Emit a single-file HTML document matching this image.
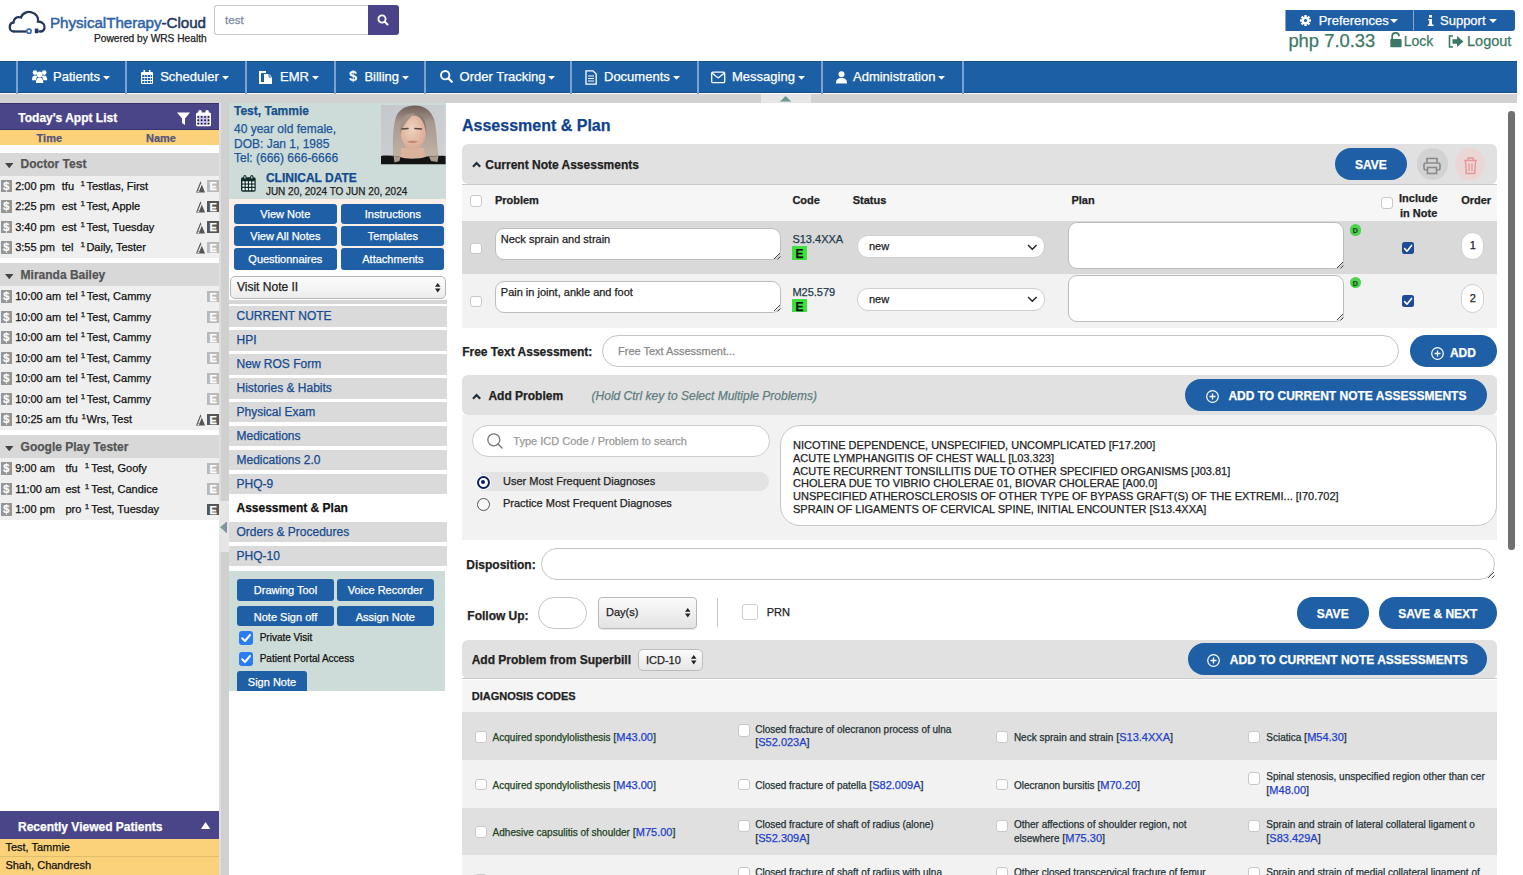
<!DOCTYPE html>
<html><head><meta charset="utf-8">
<style>
*{box-sizing:border-box;margin:0;padding:0}
html,body{width:1523px;height:875px;overflow:hidden;background:#fff;font-family:"Liberation Sans",sans-serif;color:#222}
.a{position:absolute}
.t{position:absolute;white-space:nowrap;line-height:1}
body{-webkit-text-stroke:0.25px currentColor}
.b{font-weight:bold}
svg{position:absolute;overflow:visible}
</style></head><body>
<!-- HEADER -->
<svg style="left:0;top:0" width="60" height="45">
 <path d="M13.5 31.5 C8.5 31.5 8.5 23 13.5 22.5 C13.5 18.5 17 16 21 17.5 C22.5 12.5 28 11 32 12.5 C36.5 14 38.5 17.5 38 21.5 C43 21.5 45 25 44.5 28 C44 30.5 42.5 31.5 40.5 31.5" fill="none" stroke="#24385e" stroke-width="2.3" stroke-linecap="round"/>
 <path d="M13.5 31.5 L26.5 31.5" stroke="#24385e" stroke-width="2.3" fill="none"/>
 <circle cx="29" cy="31.2" r="2.1" fill="none" stroke="#2f67b0" stroke-width="1.6"/>
 <rect x="34.8" y="28.6" width="3.6" height="4.6" fill="#24385e"/>
 <path d="M38.4 31.4 L40.5 31.4" stroke="#24385e" stroke-width="2"/>
</svg>
<div class="t" style="left:50px;top:14.6px;font-size:15.2px;color:#2f63a6;letter-spacing:-0.05px;-webkit-text-stroke:0.5px currentColor">PhysicalTherapy<span style="color:#24385e">-Cloud</span></div>
<div class="t" style="left:94px;top:33.6px;font-size:10.2px;color:#222">Powered by WRS Health</div>
<div class="a" style="left:214px;top:5px;width:155px;height:29.5px;border:1px solid #c9c9c9;border-right:none;border-radius:3px 0 0 3px;background:#fff"></div>
<div class="t" style="left:225px;top:14px;font-size:11.6px;color:#7c87a0">test</div>
<div class="a" style="left:367.5px;top:5px;width:31.5px;height:29.5px;background:#4a4389;border-radius:0 3px 3px 0"></div>
<svg style="left:377px;top:14px" width="12" height="12"><circle cx="5" cy="5" r="3.6" fill="none" stroke="#fff" stroke-width="1.8"/><path d="M7.6 7.6 L10.5 10.5" stroke="#fff" stroke-width="2" stroke-linecap="round"/></svg>

<div class="a" style="left:1284.6px;top:10px;width:230.4px;height:20.7px;background:#1e5ea5;border-radius:1px 3px 3px 1px;border-left:1px solid #8aa6c8"></div>
<div class="a" style="left:1413px;top:10px;width:1px;height:20.7px;background:#8aa6c8"></div>
<svg style="left:1300px;top:15px" width="12" height="12"><g fill="#fff"><circle cx="5.5" cy="5.5" r="3.8"/><rect x="4.3" y="0" width="2.4" height="11"/><rect x="0" y="4.3" width="11" height="2.4"/><rect x="4.3" y="0" width="2.4" height="11" transform="rotate(45 5.5 5.5)"/><rect x="4.3" y="0" width="2.4" height="11" transform="rotate(-45 5.5 5.5)"/></g><circle cx="5.5" cy="5.5" r="1.6" fill="#1e5ea5"/></svg>
<div class="t" style="left:1318.7px;top:13.8px;font-size:13px;color:#fff">Preferences</div>
<svg style="left:1390px;top:19px" width="9" height="5"><path d="M0 0 L8 0 L4 4Z" fill="#fff"/></svg>
<svg style="left:1427px;top:15px" width="8" height="12"><g fill="#fff"><rect x="2" y="0" width="3" height="2.6"/><path d="M1 4 L5 4 L5 9.5 L6.5 9.5 L6.5 11 L0.8 11 L0.8 9.5 L2.2 9.5 L2.2 5.3 L1 5.3Z"/></g></svg>
<div class="t" style="left:1440px;top:13.8px;font-size:13px;color:#fff">Support</div>
<svg style="left:1489px;top:19px" width="9" height="5"><path d="M0 0 L8 0 L4 4Z" fill="#fff"/></svg>

<div class="t" style="left:1288.4px;top:32.3px;font-size:18.4px;color:#3b7866">php 7.0.33</div>
<svg style="left:1389.5px;top:32px" width="13" height="16"><path d="M2.2 7 L2.2 4.2 C2.2 1.6 3.8 0.8 5.6 0.8 C7.4 0.8 9 1.6 9 4.2" fill="none" stroke="#3b7866" stroke-width="1.8"/><rect x="0.3" y="7" width="11.3" height="8.2" rx="1" fill="#3b7866"/></svg>
<div class="t" style="left:1403.7px;top:34.2px;font-size:14px;color:#3b7866">Lock</div>
<svg style="left:1447.5px;top:35px" width="17" height="13"><path d="M5 1 L1.5 1 L1.5 12 L5 12" fill="none" stroke="#3b7866" stroke-width="1.6"/><path d="M4.5 4.2 L9 4.2 L9 1 L15.5 6.5 L9 12 L9 8.8 L4.5 8.8Z" fill="#3b7866"/></svg>
<div class="t" style="left:1467px;top:34.2px;font-size:14.5px;color:#3b7866">Logout</div>

<!-- NAV -->
<div class="a" style="left:0;top:61.4px;width:1517px;height:31.9px;background:#1d5fa4;border-top:1px solid #184d88;border-bottom:1px solid #184d88"></div>
<div class="a" style="left:0;top:94.1px;width:1517px;height:9.2px;background:#d1d1d1"></div>
<div class="a" style="left:760.5px;top:94.1px;width:50.5px;height:9.2px;background:#e6e6e6"></div>
<svg style="left:780px;top:95.5px" width="12" height="6"><path d="M0 5.5 L5.6 0 L11.2 5.5Z" fill="#6a9a90"/></svg>
<div class="a" style="left:16px;top:61.4px;width:1.6px;height:32.3px;background:#7aa2cf"></div>
<div class="a" style="left:125px;top:61.4px;width:1.6px;height:32.3px;background:#7aa2cf"></div>
<div class="a" style="left:245px;top:61.4px;width:1.6px;height:32.3px;background:#7aa2cf"></div>
<div class="a" style="left:334px;top:61.4px;width:1.6px;height:32.3px;background:#7aa2cf"></div>
<div class="a" style="left:424px;top:61.4px;width:1.6px;height:32.3px;background:#7aa2cf"></div>
<div class="a" style="left:570px;top:61.4px;width:1.6px;height:32.3px;background:#7aa2cf"></div>
<div class="a" style="left:697px;top:61.4px;width:1.6px;height:32.3px;background:#7aa2cf"></div>
<div class="a" style="left:821px;top:61.4px;width:1.6px;height:32.3px;background:#7aa2cf"></div>
<div class="a" style="left:962px;top:61.4px;width:1.6px;height:32.3px;background:#7aa2cf"></div>
<div class="t" style="left:53px;top:70.4px;font-size:13px;color:#fff">Patients</div>
<svg style="left:102.8px;top:76px" width="9" height="5"><path d="M0 0 L7 0 L3.5 3.8Z" fill="#fff"/></svg>
<svg style="left:31.5px;top:70.2px" width="16" height="16"><g fill="#fff"><circle cx="3" cy="2.6" r="2.3"/><circle cx="12.2" cy="2.6" r="2.3"/><circle cx="7.6" cy="4.4" r="2.8"/><path d="M0 10.2 C0 6.8 1.2 5.6 3 5.6 C4.2 5.6 5 6 5.5 6.6 C4.5 7.6 4 8.8 4 10.2Z"/><path d="M15.2 10.2 C15.2 6.8 14 5.6 12.2 5.6 C11 5.6 10.2 6 9.7 6.6 C10.7 7.6 11.2 8.8 11.2 10.2Z"/><path d="M3.9 13 C3.9 9.3 5.4 7.6 7.6 7.6 C9.8 7.6 11.3 9.3 11.3 13Z"/></g></svg>
<div class="t" style="left:160.2px;top:70.4px;font-size:13px;color:#fff">Scheduler</div>
<svg style="left:221.5px;top:76px" width="9" height="5"><path d="M0 0 L7 0 L3.5 3.8Z" fill="#fff"/></svg>
<svg style="left:141px;top:70px" width="16" height="16"><g fill="#fff"><rect x="0" y="2" width="12" height="12" rx="1"/><rect x="2.5" y="0" width="1.6" height="3"/><rect x="7.9" y="0" width="1.6" height="3"/></g><g fill="#1e5ea5"><rect x="1.2" y="5" width="2.2" height="2"/><rect x="4.1" y="5" width="2.2" height="2"/><rect x="7" y="5" width="2.2" height="2"/><rect x="1.2" y="8" width="2.2" height="2"/><rect x="4.1" y="8" width="2.2" height="2"/><rect x="7" y="8" width="2.2" height="2"/><rect x="1.2" y="11" width="2.2" height="2"/><rect x="4.1" y="11" width="2.2" height="2"/><rect x="7" y="11" width="2.2" height="2"/><rect x="9.8" y="5" width="1.2" height="2"/><rect x="9.8" y="8" width="1.2" height="2"/><rect x="9.8" y="11" width="1.2" height="2"/></g></svg>
<div class="t" style="left:280px;top:70.4px;font-size:13px;color:#fff">EMR</div>
<svg style="left:311.7px;top:76px" width="9" height="5"><path d="M0 0 L7 0 L3.5 3.8Z" fill="#fff"/></svg>
<svg style="left:259.4px;top:70px" width="16" height="16"><g fill="#fff"><path d="M0 1 L7 1 L7 3 L2 3 L2 12 L5 12 L5 14 L0 14Z"/><path d="M5 4 L10 4 L13 7 L13 14 L5 14Z"/></g><path d="M10 4 L10 7 L13 7" fill="none" stroke="#1e5ea5" stroke-width="0.9"/></svg>
<div class="t" style="left:364.4px;top:70.4px;font-size:13px;color:#fff">Billing</div>
<svg style="left:401.9px;top:76px" width="9" height="5"><path d="M0 0 L7 0 L3.5 3.8Z" fill="#fff"/></svg>
<svg style="left:348.7px;top:70px" width="16" height="16"><text x="0" y="11.4" font-family="Liberation Sans" font-weight="bold" font-size="14.5" fill="#fff" stroke="none">$</text></svg>
<div class="t" style="left:459.6px;top:70.4px;font-size:13px;color:#fff">Order Tracking</div>
<svg style="left:548.4px;top:76px" width="9" height="5"><path d="M0 0 L7 0 L3.5 3.8Z" fill="#fff"/></svg>
<svg style="left:440px;top:70px" width="16" height="16"><circle cx="5.2" cy="5.2" r="4.2" fill="none" stroke="#fff" stroke-width="1.9"/><path d="M8.3 8.3 L11.8 11.8" stroke="#fff" stroke-width="2.2" stroke-linecap="round"/></svg>
<div class="t" style="left:604px;top:70.4px;font-size:13px;color:#fff">Documents</div>
<svg style="left:672.6px;top:76px" width="9" height="5"><path d="M0 0 L7 0 L3.5 3.8Z" fill="#fff"/></svg>
<svg style="left:585px;top:70px" width="16" height="16"><path d="M1 0.8 L8 0.8 L11.2 4 L11.2 14.2 L1 14.2Z" fill="none" stroke="#fff" stroke-width="1.3"/><path d="M3 6 L9 6 M3 8.5 L9 8.5 M3 11 L9 11" stroke="#fff" stroke-width="1.1"/></svg>
<div class="t" style="left:732px;top:70.4px;font-size:13px;color:#fff">Messaging</div>
<svg style="left:797.7px;top:76px" width="9" height="5"><path d="M0 0 L7 0 L3.5 3.8Z" fill="#fff"/></svg>
<svg style="left:711px;top:71.2px" width="16" height="16"><rect x="0.7" y="1.2" width="13" height="10.5" rx="1.2" fill="none" stroke="#fff" stroke-width="1.3"/><path d="M1 2 L7.2 7 L13.4 2" fill="none" stroke="#fff" stroke-width="1.3"/></svg>
<div class="t" style="left:853px;top:70.4px;font-size:13px;color:#fff">Administration</div>
<svg style="left:938.2px;top:76px" width="9" height="5"><path d="M0 0 L7 0 L3.5 3.8Z" fill="#fff"/></svg>
<svg style="left:835.5px;top:71px" width="16" height="16"><g fill="#fff"><circle cx="5.5" cy="3.3" r="3"/><path d="M0 12.5 C0 8.3 2 7 5.5 7 C9 7 11 8.3 11 12.5Z"/></g></svg>
<!-- LEFT -->
<div class="a" style="left:0;top:103.4px;width:219px;height:26.6px;background:#4a4589;border-top:1px solid #36316f;border-bottom:1px solid #36316f"></div>
<div class="t b" style="left:18.3px;top:112.1px;font-size:12px;color:#fff">Today's Appt List</div>
<svg style="left:176.5px;top:111.5px" width="14" height="14"><path d="M0 0.5 L13 0.5 L8 6.5 L8 13 L5 11 L5 6.5Z" fill="#fff"/></svg>
<svg style="left:196px;top:109.6px" width="16" height="17"><rect x="0" y="2.4" width="15" height="13.9" rx="1.6" fill="#fff"/><rect x="2.3" y="0" width="3.4" height="4.6" rx="1.6" fill="#fff"/><rect x="9.4" y="0" width="3.4" height="4.6" rx="1.6" fill="#fff"/><rect x="1.4" y="5.6" width="12.2" height="9.4" fill="#c9c5ef"/><g fill="#150f33"><circle cx="2.20" cy="6.90" r="0.95"/><circle cx="5.65" cy="6.90" r="0.95"/><circle cx="9.10" cy="6.90" r="0.95"/><circle cx="12.55" cy="6.90" r="0.95"/><circle cx="2.20" cy="10.25" r="0.95"/><circle cx="5.65" cy="10.25" r="0.95"/><circle cx="9.10" cy="10.25" r="0.95"/><circle cx="12.55" cy="10.25" r="0.95"/><circle cx="2.20" cy="13.60" r="0.95"/><circle cx="5.65" cy="13.60" r="0.95"/><circle cx="9.10" cy="13.60" r="0.95"/><circle cx="12.55" cy="13.60" r="0.95"/></g></svg>
<div class="a" style="left:0;top:129.9px;width:219px;height:15.1px;background:#fbd179"></div>
<div class="t b" style="left:36.6px;top:133px;font-size:11px;color:#55557a">Time</div>
<div class="t b" style="left:146px;top:133px;font-size:11px;color:#55557a">Name</div>
<div class="a" style="left:0;top:152.8px;width:219px;height:22.9px;background:#d8d8d8"></div>
<svg style="left:4.6px;top:163.4px" width="9" height="6"><path d="M0 0 L8.5 0 L4.25 5.2Z" fill="#444"/></svg>
<div class="t b" style="left:20.6px;top:158.4px;font-size:12px;color:#555">Doctor Test</div>
<div class="a" style="left:0;top:175.7px;width:219px;height:82.0px;background:#efefef"></div>
<div class="a" style="left:1.3px;top:179.8px;width:10.5px;height:12.6px;background:#969696"></div><div class="t b" style="left:2.9px;top:180.8px;font-size:11.5px;color:#fff;transform:scaleX(0.85);transform-origin:left">S</div><div class="a" style="left:6.2px;top:180.5px;width:1px;height:11px;background:#fff;opacity:.7"></div>
<div class="t" style="left:15.2px;top:180.7px;font-size:11px;color:#111">2:00 pm</div>
<div class="t" style="left:61.8px;top:180.7px;font-size:11px;color:#111">tfu</div>
<div class="t" style="left:80.6px;top:179.5px;font-size:8px;color:#111">1</div>
<div class="t" style="left:86.4px;top:180.7px;font-size:11px;color:#111">Testlas, First</div>
<svg style="left:195.5px;top:180.5px" width="10" height="12"><path d="M4.5 0.3 L9 11.6 L0 11.6Z" fill="#555"/><path d="M5.6 2.5 L2.8 9.2" stroke="#f0f0f0" stroke-width="1.3"/><rect x="1.6" y="9.6" width="1.6" height="1.4" fill="#f0f0f0"/></svg>
<div class="a" style="left:207.2px;top:180.0px;width:11.6px;height:11.5px;background:#b9b9b9"></div><div class="t b" style="left:209.6px;top:181.3px;font-size:11px;color:#fff">E</div>
<div class="a" style="left:1.3px;top:200.3px;width:10.5px;height:12.6px;background:#969696"></div><div class="t b" style="left:2.9px;top:201.3px;font-size:11.5px;color:#fff;transform:scaleX(0.85);transform-origin:left">S</div><div class="a" style="left:6.2px;top:201.0px;width:1px;height:11px;background:#fff;opacity:.7"></div>
<div class="t" style="left:15.2px;top:201.2px;font-size:11px;color:#111">2:25 pm</div>
<div class="t" style="left:61.8px;top:201.2px;font-size:11px;color:#111">est</div>
<div class="t" style="left:80.6px;top:200.0px;font-size:8px;color:#111">1</div>
<div class="t" style="left:86.4px;top:201.2px;font-size:11px;color:#111">Test, Apple</div>
<svg style="left:195.5px;top:201.0px" width="10" height="12"><path d="M4.5 0.3 L9 11.6 L0 11.6Z" fill="#555"/><path d="M5.6 2.5 L2.8 9.2" stroke="#f0f0f0" stroke-width="1.3"/><rect x="1.6" y="9.6" width="1.6" height="1.4" fill="#f0f0f0"/></svg>
<div class="a" style="left:207.2px;top:200.5px;width:11.6px;height:11.5px;background:#555"></div><div class="t b" style="left:209.6px;top:201.8px;font-size:11px;color:#fff">E</div>
<div class="a" style="left:1.3px;top:220.8px;width:10.5px;height:12.6px;background:#969696"></div><div class="t b" style="left:2.9px;top:221.8px;font-size:11.5px;color:#fff;transform:scaleX(0.85);transform-origin:left">S</div><div class="a" style="left:6.2px;top:221.5px;width:1px;height:11px;background:#fff;opacity:.7"></div>
<div class="t" style="left:15.2px;top:221.7px;font-size:11px;color:#111">3:40 pm</div>
<div class="t" style="left:61.8px;top:221.7px;font-size:11px;color:#111">est</div>
<div class="t" style="left:80.6px;top:220.5px;font-size:8px;color:#111">1</div>
<div class="t" style="left:86.4px;top:221.7px;font-size:11px;color:#111">Test, Tuesday</div>
<svg style="left:195.5px;top:221.5px" width="10" height="12"><path d="M4.5 0.3 L9 11.6 L0 11.6Z" fill="#555"/><path d="M5.6 2.5 L2.8 9.2" stroke="#f0f0f0" stroke-width="1.3"/><rect x="1.6" y="9.6" width="1.6" height="1.4" fill="#f0f0f0"/></svg>
<div class="a" style="left:207.2px;top:221.0px;width:11.6px;height:11.5px;background:#555"></div><div class="t b" style="left:209.6px;top:222.3px;font-size:11px;color:#fff">E</div>
<div class="a" style="left:1.3px;top:241.3px;width:10.5px;height:12.6px;background:#969696"></div><div class="t b" style="left:2.9px;top:242.3px;font-size:11.5px;color:#fff;transform:scaleX(0.85);transform-origin:left">S</div><div class="a" style="left:6.2px;top:242.0px;width:1px;height:11px;background:#fff;opacity:.7"></div>
<div class="t" style="left:15.2px;top:242.2px;font-size:11px;color:#111">3:55 pm</div>
<div class="t" style="left:61.8px;top:242.2px;font-size:11px;color:#111">tel</div>
<div class="t" style="left:80.6px;top:241.0px;font-size:8px;color:#111">1</div>
<div class="t" style="left:86.4px;top:242.2px;font-size:11px;color:#111">Daily, Tester</div>
<svg style="left:195.5px;top:242.0px" width="10" height="12"><path d="M4.5 0.3 L9 11.6 L0 11.6Z" fill="#555"/><path d="M5.6 2.5 L2.8 9.2" stroke="#f0f0f0" stroke-width="1.3"/><rect x="1.6" y="9.6" width="1.6" height="1.4" fill="#f0f0f0"/></svg>
<div class="a" style="left:207.2px;top:241.5px;width:11.6px;height:11.5px;background:#b9b9b9"></div><div class="t b" style="left:209.6px;top:242.8px;font-size:11px;color:#fff">E</div>
<div class="a" style="left:0;top:263.3px;width:219px;height:22.9px;background:#d8d8d8"></div>
<svg style="left:4.6px;top:273.9px" width="9" height="6"><path d="M0 0 L8.5 0 L4.25 5.2Z" fill="#444"/></svg>
<div class="t b" style="left:20.6px;top:268.9px;font-size:12px;color:#555">Miranda Bailey</div>
<div class="a" style="left:0;top:286.2px;width:219px;height:143.5px;background:#efefef"></div>
<div class="a" style="left:1.3px;top:290.3px;width:10.5px;height:12.6px;background:#969696"></div><div class="t b" style="left:2.9px;top:291.3px;font-size:11.5px;color:#fff;transform:scaleX(0.85);transform-origin:left">S</div><div class="a" style="left:6.2px;top:291.0px;width:1px;height:11px;background:#fff;opacity:.7"></div>
<div class="t" style="left:15.2px;top:291.2px;font-size:11px;color:#111">10:00 am</div>
<div class="t" style="left:66px;top:291.2px;font-size:11px;color:#111">tel</div>
<div class="t" style="left:80.8px;top:290.0px;font-size:8px;color:#111">1</div>
<div class="t" style="left:86.8px;top:291.2px;font-size:11px;color:#111">Test, Cammy</div>
<div class="a" style="left:207.2px;top:290.5px;width:11.6px;height:11.5px;background:#b9b9b9"></div><div class="t b" style="left:209.6px;top:291.8px;font-size:11px;color:#fff">E</div>
<div class="a" style="left:1.3px;top:310.8px;width:10.5px;height:12.6px;background:#969696"></div><div class="t b" style="left:2.9px;top:311.8px;font-size:11.5px;color:#fff;transform:scaleX(0.85);transform-origin:left">S</div><div class="a" style="left:6.2px;top:311.5px;width:1px;height:11px;background:#fff;opacity:.7"></div>
<div class="t" style="left:15.2px;top:311.7px;font-size:11px;color:#111">10:00 am</div>
<div class="t" style="left:66px;top:311.7px;font-size:11px;color:#111">tel</div>
<div class="t" style="left:80.8px;top:310.5px;font-size:8px;color:#111">1</div>
<div class="t" style="left:86.8px;top:311.7px;font-size:11px;color:#111">Test, Cammy</div>
<div class="a" style="left:207.2px;top:311.0px;width:11.6px;height:11.5px;background:#b9b9b9"></div><div class="t b" style="left:209.6px;top:312.3px;font-size:11px;color:#fff">E</div>
<div class="a" style="left:1.3px;top:331.3px;width:10.5px;height:12.6px;background:#969696"></div><div class="t b" style="left:2.9px;top:332.3px;font-size:11.5px;color:#fff;transform:scaleX(0.85);transform-origin:left">S</div><div class="a" style="left:6.2px;top:332.0px;width:1px;height:11px;background:#fff;opacity:.7"></div>
<div class="t" style="left:15.2px;top:332.2px;font-size:11px;color:#111">10:00 am</div>
<div class="t" style="left:66px;top:332.2px;font-size:11px;color:#111">tel</div>
<div class="t" style="left:80.8px;top:331.0px;font-size:8px;color:#111">1</div>
<div class="t" style="left:86.8px;top:332.2px;font-size:11px;color:#111">Test, Cammy</div>
<div class="a" style="left:207.2px;top:331.5px;width:11.6px;height:11.5px;background:#b9b9b9"></div><div class="t b" style="left:209.6px;top:332.8px;font-size:11px;color:#fff">E</div>
<div class="a" style="left:1.3px;top:351.8px;width:10.5px;height:12.6px;background:#969696"></div><div class="t b" style="left:2.9px;top:352.8px;font-size:11.5px;color:#fff;transform:scaleX(0.85);transform-origin:left">S</div><div class="a" style="left:6.2px;top:352.5px;width:1px;height:11px;background:#fff;opacity:.7"></div>
<div class="t" style="left:15.2px;top:352.7px;font-size:11px;color:#111">10:00 am</div>
<div class="t" style="left:66px;top:352.7px;font-size:11px;color:#111">tel</div>
<div class="t" style="left:80.8px;top:351.5px;font-size:8px;color:#111">1</div>
<div class="t" style="left:86.8px;top:352.7px;font-size:11px;color:#111">Test, Cammy</div>
<div class="a" style="left:207.2px;top:352.0px;width:11.6px;height:11.5px;background:#b9b9b9"></div><div class="t b" style="left:209.6px;top:353.3px;font-size:11px;color:#fff">E</div>
<div class="a" style="left:1.3px;top:372.3px;width:10.5px;height:12.6px;background:#969696"></div><div class="t b" style="left:2.9px;top:373.3px;font-size:11.5px;color:#fff;transform:scaleX(0.85);transform-origin:left">S</div><div class="a" style="left:6.2px;top:373.0px;width:1px;height:11px;background:#fff;opacity:.7"></div>
<div class="t" style="left:15.2px;top:373.2px;font-size:11px;color:#111">10:00 am</div>
<div class="t" style="left:66px;top:373.2px;font-size:11px;color:#111">tel</div>
<div class="t" style="left:80.8px;top:372.0px;font-size:8px;color:#111">1</div>
<div class="t" style="left:86.8px;top:373.2px;font-size:11px;color:#111">Test, Cammy</div>
<div class="a" style="left:207.2px;top:372.5px;width:11.6px;height:11.5px;background:#b9b9b9"></div><div class="t b" style="left:209.6px;top:373.8px;font-size:11px;color:#fff">E</div>
<div class="a" style="left:1.3px;top:392.8px;width:10.5px;height:12.6px;background:#969696"></div><div class="t b" style="left:2.9px;top:393.8px;font-size:11.5px;color:#fff;transform:scaleX(0.85);transform-origin:left">S</div><div class="a" style="left:6.2px;top:393.5px;width:1px;height:11px;background:#fff;opacity:.7"></div>
<div class="t" style="left:15.2px;top:393.7px;font-size:11px;color:#111">10:00 am</div>
<div class="t" style="left:66px;top:393.7px;font-size:11px;color:#111">tel</div>
<div class="t" style="left:80.8px;top:392.5px;font-size:8px;color:#111">1</div>
<div class="t" style="left:86.8px;top:393.7px;font-size:11px;color:#111">Test, Cammy</div>
<div class="a" style="left:207.2px;top:393.0px;width:11.6px;height:11.5px;background:#b9b9b9"></div><div class="t b" style="left:209.6px;top:394.3px;font-size:11px;color:#fff">E</div>
<div class="a" style="left:1.3px;top:413.3px;width:10.5px;height:12.6px;background:#969696"></div><div class="t b" style="left:2.9px;top:414.3px;font-size:11.5px;color:#fff;transform:scaleX(0.85);transform-origin:left">S</div><div class="a" style="left:6.2px;top:414.0px;width:1px;height:11px;background:#fff;opacity:.7"></div>
<div class="t" style="left:15.2px;top:414.2px;font-size:11px;color:#111">10:25 am</div>
<div class="t" style="left:65.6px;top:414.2px;font-size:11px;color:#111">tfu</div>
<div class="t" style="left:81.4px;top:413.0px;font-size:8px;color:#111">1</div>
<div class="t" style="left:86.6px;top:414.2px;font-size:11px;color:#111">Wrs, Test</div>
<svg style="left:195.5px;top:414.0px" width="10" height="12"><path d="M4.5 0.3 L9 11.6 L0 11.6Z" fill="#555"/><path d="M5.6 2.5 L2.8 9.2" stroke="#f0f0f0" stroke-width="1.3"/><rect x="1.6" y="9.6" width="1.6" height="1.4" fill="#f0f0f0"/></svg>
<div class="a" style="left:207.2px;top:413.5px;width:11.6px;height:11.5px;background:#555"></div><div class="t b" style="left:209.6px;top:414.8px;font-size:11px;color:#fff">E</div>
<div class="a" style="left:0;top:435.3px;width:219px;height:22.9px;background:#d8d8d8"></div>
<svg style="left:4.6px;top:445.9px" width="9" height="6"><path d="M0 0 L8.5 0 L4.25 5.2Z" fill="#444"/></svg>
<div class="t b" style="left:20.6px;top:440.9px;font-size:12px;color:#555">Google Play Tester</div>
<div class="a" style="left:0;top:458.2px;width:219px;height:61.5px;background:#efefef"></div>
<div class="a" style="left:1.3px;top:462.3px;width:10.5px;height:12.6px;background:#969696"></div><div class="t b" style="left:2.9px;top:463.3px;font-size:11.5px;color:#fff;transform:scaleX(0.85);transform-origin:left">S</div><div class="a" style="left:6.2px;top:463.0px;width:1px;height:11px;background:#fff;opacity:.7"></div>
<div class="t" style="left:15.2px;top:463.2px;font-size:11px;color:#111">9:00 am</div>
<div class="t" style="left:65.5px;top:463.2px;font-size:11px;color:#111">tfu</div>
<div class="t" style="left:84.7px;top:462.0px;font-size:8px;color:#111">1</div>
<div class="t" style="left:91.2px;top:463.2px;font-size:11px;color:#111">Test, Goofy</div>
<div class="a" style="left:207.2px;top:462.5px;width:11.6px;height:11.5px;background:#b9b9b9"></div><div class="t b" style="left:209.6px;top:463.8px;font-size:11px;color:#fff">E</div>
<div class="a" style="left:1.3px;top:482.8px;width:10.5px;height:12.6px;background:#969696"></div><div class="t b" style="left:2.9px;top:483.8px;font-size:11.5px;color:#fff;transform:scaleX(0.85);transform-origin:left">S</div><div class="a" style="left:6.2px;top:483.5px;width:1px;height:11px;background:#fff;opacity:.7"></div>
<div class="t" style="left:15.2px;top:483.7px;font-size:11px;color:#111">11:00 am</div>
<div class="t" style="left:65.5px;top:483.7px;font-size:11px;color:#111">est</div>
<div class="t" style="left:84.7px;top:482.5px;font-size:8px;color:#111">1</div>
<div class="t" style="left:91.2px;top:483.7px;font-size:11px;color:#111">Test, Candice</div>
<div class="a" style="left:207.2px;top:483.0px;width:11.6px;height:11.5px;background:#b9b9b9"></div><div class="t b" style="left:209.6px;top:484.3px;font-size:11px;color:#fff">E</div>
<div class="a" style="left:1.3px;top:503.3px;width:10.5px;height:12.6px;background:#969696"></div><div class="t b" style="left:2.9px;top:504.3px;font-size:11.5px;color:#fff;transform:scaleX(0.85);transform-origin:left">S</div><div class="a" style="left:6.2px;top:504.0px;width:1px;height:11px;background:#fff;opacity:.7"></div>
<div class="t" style="left:15.2px;top:504.2px;font-size:11px;color:#111">1:00 pm</div>
<div class="t" style="left:65.5px;top:504.2px;font-size:11px;color:#111">pro</div>
<div class="t" style="left:84.7px;top:503.0px;font-size:8px;color:#111">1</div>
<div class="t" style="left:91.2px;top:504.2px;font-size:11px;color:#111">Test, Tuesday</div>
<div class="a" style="left:207.2px;top:503.5px;width:11.6px;height:11.5px;background:#555"></div><div class="t b" style="left:209.6px;top:504.8px;font-size:11px;color:#fff">E</div>
<div class="a" style="left:219px;top:103.3px;width:10px;height:772px;background:#d0d0d0"></div>
<div class="a" style="left:219px;top:103.3px;width:2.4px;height:772px;background:#dedede"></div>
<div class="a" style="left:219px;top:501.4px;width:10px;height:50.4px;background:#e6e6e6"></div>
<svg style="left:219.5px;top:521.6px" width="7" height="11"><path d="M6.3 0 L6.3 10.7 L0 5.35Z" fill="#7d9c98"/><path d="M6.3 0 L6.3 10.7" stroke="#8a7fb0" stroke-width="1.2"/></svg>
<div class="a" style="left:0;top:811.1px;width:219px;height:27.8px;background:#4a4589"></div>
<div class="t b" style="left:18px;top:820.5px;font-size:12px;color:#fff">Recently Viewed Patients</div>
<svg style="left:200.8px;top:822.3px" width="10" height="8"><path d="M4.6 0 L9.2 6.9 L0 6.9Z" fill="#fff"/></svg>
<div class="a" style="left:0;top:838.9px;width:219px;height:36.1px;background:#fbd179"></div>
<div class="a" style="left:0;top:856.4px;width:219px;height:0.8px;background:#e2bd6c"></div>
<div class="t" style="left:5.4px;top:841.7px;font-size:11px;color:#111">Test, Tammie</div>
<div class="t" style="left:5.4px;top:860.2px;font-size:11px;color:#111">Shah, Chandresh</div>
<!-- /LEFT -->
<!-- MAIN -->
<div class="t b" style="left:462px;top:117.8px;font-size:16px;color:#0f428c;">Assessment &amp; Plan</div>
<div class="a" style="left:462px;top:144.4px;width:1034.5px;height:39.9px;background:#e1e1e1;border-radius:6px"></div>
<div class="a" style="left:462px;top:183.6px;width:1034.5px;height:1.2px;background:#c9c9c9;"></div>
<svg style="left:472px;top:161px" width="10" height="7"><path d="M1 5.8 L4.6 2 L8.2 5.8" fill="none" stroke="#1d2b36" stroke-width="2.1"/></svg>
<div class="t b" style="left:485.3px;top:158.8px;font-size:12px;color:#222;">Current Note Assessments</div>
<div class="a b" style="left:1334.8px;top:148px;width:72.1px;height:32.0px;background:#1f5fa6;border-radius:16.0px;color:#fff;font-size:12px;display:flex;align-items:center;justify-content:center;white-space:nowrap"><span style="display:flex;align-items:center;position:relative;top:1.2px">SAVE</span></div>
<div class="a" style="left:1416.5px;top:148.3px;width:31.6px;height:31.6px;background:#d2d2d2;border-radius:50%"></div>
<svg style="left:1422.5px;top:156.5px" width="19" height="18"><path d="M4 6 L4 1.5 L14 1.5 L14 6" fill="none" stroke="#8a8a8a" stroke-width="1.6"/><rect x="1" y="6" width="16" height="7" rx="2" fill="none" stroke="#8a8a8a" stroke-width="1.6"/><rect x="4.5" y="10.5" width="9" height="6" fill="#d2d2d2" stroke="#8a8a8a" stroke-width="1.6"/></svg>
<div class="a" style="left:1455px;top:148.3px;width:30.2px;height:31.6px;background:#ebd6d6;border-radius:50%"></div>
<svg style="left:1462.6px;top:156.5px" width="15" height="18"><path d="M1 3.5 L14 3.5 M5 3.5 L5 1 L10 1 L10 3.5" fill="none" stroke="#e59a9a" stroke-width="1.5"/><path d="M2.5 4 L3.3 16.5 L11.7 16.5 L12.5 4" fill="none" stroke="#e59a9a" stroke-width="1.5"/><path d="M6 6.5 L6 14 M9 6.5 L9 14" stroke="#e59a9a" stroke-width="1.4"/></svg>
<div class="a" style="left:462px;top:184.8px;width:1034.5px;height:36.3px;background:#f6f6f6;"></div>
<div class="a" style="left:469.8px;top:195.4px;width:11.8px;height:11.7px;background:#fff;border:1px solid #c8c8c8;border-radius:3px"></div>
<div class="t b" style="left:494.9px;top:195.4px;font-size:11px;color:#222;">Problem</div>
<div class="t b" style="left:792.4px;top:195.4px;font-size:11px;color:#222;">Code</div>
<div class="t b" style="left:852.7px;top:195.4px;font-size:11px;color:#222;">Status</div>
<div class="t b" style="left:1071.4px;top:195.4px;font-size:11px;color:#222;">Plan</div>
<div class="a" style="left:1381.2px;top:197.2px;width:12.2px;height:12.2px;background:#fff;border:1px solid #c8c8c8;border-radius:3px"></div>
<div class="t b" style="left:1399px;top:193.3px;font-size:11px;color:#222;">Include</div>
<div class="t b" style="left:1400px;top:207.5px;font-size:11px;color:#222;">in Note</div>
<div class="t b" style="left:1461.2px;top:195.4px;font-size:11px;color:#222;">Order</div>
<div class="a" style="left:462px;top:221.1px;width:1034.5px;height:52.9px;background:#d9d9d9;"></div>
<div class="a" style="left:469.8px;top:242.6px;width:11.8px;height:11.4px;background:#fff;border:1px solid #c8c8c8;border-radius:3px"></div>
<div class="a" style="left:495.1px;top:228.0px;width:286.4px;height:32.2px;background:#fff;border:1px solid #bdbdbd;border-radius:9px"></div>
<svg style="left:773px;top:251.5px" width="8" height="8"><path d="M1 7 L7 1 M4.5 7.5 L7.5 4.5" stroke="#444" stroke-width="1"/></svg>
<div class="t" style="left:500.8px;top:233.8px;font-size:11px;color:#222;">Neck sprain and strain</div>
<div class="t" style="left:792.4px;top:233.7px;font-size:11px;color:#1e3a48;">S13.4XXA</div>
<div class="a" style="left:792.4px;top:246.3px;width:15.1px;height:13.3px;background:#3ee03e;"></div>
<div class="t b" style="left:795.6px;top:247.6px;font-size:12px;color:#111;">E</div>
<div class="a" style="left:857.4px;top:235.4px;width:187.2px;height:22.4px;background:#fff;border:1px solid #cfcfcf;border-radius:11px"></div>
<div class="t" style="left:869px;top:240.7px;font-size:11px;color:#222;">new</div>
<svg style="left:1026.8px;top:243.5px" width="11" height="7"><path d="M1 1 L5.3 5.3 L9.6 1" fill="none" stroke="#222" stroke-width="1.4"/></svg>
<div class="a" style="left:1067.6px;top:221.9px;width:276.4px;height:47.4px;background:#fff;border:1px solid #bdbdbd;border-radius:9px"></div>
<svg style="left:1336px;top:260.5px" width="8" height="8"><path d="M1 7 L7 1 M4.5 7.5 L7.5 4.5" stroke="#444" stroke-width="1"/></svg>
<div class="a" style="left:1349.6px;top:224.3px;width:11.7px;height:11.3px;background:#4fd24f;border-radius:50%"></div>
<div class="t b" style="left:1352.7px;top:227.0px;font-size:7px;color:#1a4a1a;">D</div>
<div class="a" style="left:1401.8px;top:241.8px;width:12.0px;height:12.7px;background:#1f4a96;border-radius:2.5px"></div>
<svg style="left:1401.8px;top:241.8px" width="12" height="13"><path d="M2.6 6.6 L5 9.2 L9.6 3.4" fill="none" stroke="#fff" stroke-width="1.6" stroke-linecap="round" stroke-linejoin="round"/></svg>
<div class="a" style="left:1461.2px;top:231.5px;width:23.0px;height:28.9px;background:#fff;border:1px solid #cfcfcf;border-radius:12px"></div>
<div class="t" style="left:1469.8px;top:240.3px;font-size:11px;color:#222;">1</div>
<div class="a" style="left:462px;top:274px;width:1034.5px;height:53.7px;background:#f2f2f2;"></div>
<div class="a" style="left:469.8px;top:295.5px;width:11.8px;height:11.4px;background:#fff;border:1px solid #c8c8c8;border-radius:3px"></div>
<div class="a" style="left:495.1px;top:280.9px;width:286.4px;height:32.2px;background:#fff;border:1px solid #bdbdbd;border-radius:9px"></div>
<svg style="left:773px;top:304.4px" width="8" height="8"><path d="M1 7 L7 1 M4.5 7.5 L7.5 4.5" stroke="#444" stroke-width="1"/></svg>
<div class="t" style="left:500.8px;top:286.7px;font-size:11px;color:#222;">Pain in joint, ankle and foot</div>
<div class="t" style="left:792.4px;top:286.6px;font-size:11px;color:#1e3a48;">M25.579</div>
<div class="a" style="left:792.4px;top:299.20000000000005px;width:15.1px;height:13.3px;background:#3ee03e;"></div>
<div class="t b" style="left:795.6px;top:300.5px;font-size:12px;color:#111;">E</div>
<div class="a" style="left:857.4px;top:288.3px;width:187.2px;height:22.4px;background:#fff;border:1px solid #cfcfcf;border-radius:11px"></div>
<div class="t" style="left:869px;top:293.6px;font-size:11px;color:#222;">new</div>
<svg style="left:1026.8px;top:296.4px" width="11" height="7"><path d="M1 1 L5.3 5.3 L9.6 1" fill="none" stroke="#222" stroke-width="1.4"/></svg>
<div class="a" style="left:1067.6px;top:274.8px;width:276.4px;height:47.4px;background:#fff;border:1px solid #bdbdbd;border-radius:9px"></div>
<svg style="left:1336px;top:313.4px" width="8" height="8"><path d="M1 7 L7 1 M4.5 7.5 L7.5 4.5" stroke="#444" stroke-width="1"/></svg>
<div class="a" style="left:1349.6px;top:277.20000000000005px;width:11.7px;height:11.3px;background:#4fd24f;border-radius:50%"></div>
<div class="t b" style="left:1352.7px;top:279.9px;font-size:7px;color:#1a4a1a;">D</div>
<div class="a" style="left:1401.8px;top:294.70000000000005px;width:12.0px;height:12.7px;background:#1f4a96;border-radius:2.5px"></div>
<svg style="left:1401.8px;top:294.7px" width="12" height="13"><path d="M2.6 6.6 L5 9.2 L9.6 3.4" fill="none" stroke="#fff" stroke-width="1.6" stroke-linecap="round" stroke-linejoin="round"/></svg>
<div class="a" style="left:1461.2px;top:284.4px;width:23.0px;height:28.9px;background:#fff;border:1px solid #cfcfcf;border-radius:12px"></div>
<div class="t" style="left:1469.8px;top:293.2px;font-size:11px;color:#222;">2</div>
<div class="t b" style="left:462.2px;top:346.1px;font-size:12px;color:#222;">Free Text Assessment:</div>
<div class="a" style="left:601.6px;top:335.4px;width:797.8px;height:31.2px;background:#fff;border:1px solid #c4c4c4;border-radius:16px"></div>
<div class="t" style="left:618px;top:345.9px;font-size:11px;color:#888;">Free Text Assessment...</div>
<div class="a b" style="left:1409.7px;top:335.3px;width:87.2px;height:31.9px;background:#1f5fa6;border-radius:15.9px;color:#fff;font-size:12px;display:flex;align-items:center;justify-content:center;white-space:nowrap"><span style="display:flex;align-items:center;position:relative;top:1.4px"><svg style="position:relative;left:auto;top:0.6px;margin-right:6.2px" width="13" height="13"><circle cx="6.5" cy="6.5" r="5.8" fill="none" stroke="#fff" stroke-width="1.2"/><path d="M6.5 3.5 L6.5 9.5 M3.5 6.5 L9.5 6.5" stroke="#fff" stroke-width="1.3"/></svg>ADD</span></div>
<div class="a" style="left:462px;top:375.2px;width:1034.5px;height:39.4px;background:#e1e1e1;border-radius:6px"></div>
<svg style="left:472px;top:393px" width="10" height="7"><path d="M1 5.8 L4.6 2 L8.2 5.8" fill="none" stroke="#1d2b36" stroke-width="2.1"/></svg>
<div class="t b" style="left:488.4px;top:389.5px;font-size:12px;color:#222;">Add Problem</div>
<div class="t" style="left:591.6px;top:389.8px;font-size:12px;color:#5f7d7d;font-style:italic">(Hold Ctrl key to Select Multiple Problems)</div>
<div class="a b" style="left:1185.4px;top:378.9px;width:301.6px;height:32.0px;background:#1f5fa6;border-radius:16.0px;color:#fff;font-size:12px;display:flex;align-items:center;justify-content:center;white-space:nowrap"><span style="display:flex;align-items:center;position:relative;top:1.2px"><svg style="position:relative;left:auto;top:0.4px;margin-right:9.5px" width="13" height="13"><circle cx="6.5" cy="6.5" r="5.8" fill="none" stroke="#fff" stroke-width="1.2"/><path d="M6.5 3.5 L6.5 9.5 M3.5 6.5 L9.5 6.5" stroke="#fff" stroke-width="1.3"/></svg>ADD TO CURRENT NOTE ASSESSMENTS</span></div>
<div class="a" style="left:462px;top:414.6px;width:1034.5px;height:125.6px;background:#f2f2f2;"></div>
<div class="a" style="left:472.1px;top:425.4px;width:297.5px;height:31.2px;background:#fff;border:1px solid #cdcdcd;border-radius:16px"></div>
<svg style="left:486.7px;top:433px" width="17" height="16"><circle cx="6.8" cy="6.8" r="6" fill="none" stroke="#777" stroke-width="1.3"/><path d="M11 11 L15 15" stroke="#777" stroke-width="1.4" stroke-linecap="round"/></svg>
<div class="t" style="left:513.3px;top:435.6px;font-size:11px;color:#999;">Type ICD Code / Problem to search</div>
<div class="a" style="left:481px;top:471.9px;width:288.0px;height:19.0px;background:#e3e3e3;border-radius:0 10px 10px 0"></div>
<div class="a" style="left:476.8px;top:475.6px;width:13.0px;height:13.0px;background:#fff;border:2.3px solid #0d2060;border-radius:50%;box-shadow:0 0 0 1px #fff"></div>
<div class="a" style="left:481.2px;top:480px;width:4.2px;height:4.2px;background:#0d2060;border-radius:50%"></div>
<div class="a" style="left:476.8px;top:497.9px;width:13.0px;height:13.0px;background:#f8f8f8;border:1.8px solid #555;border-radius:50%"></div>
<div class="t" style="left:503px;top:476.4px;font-size:11px;color:#222;">User Most Frequent Diagnoses</div>
<div class="t" style="left:503px;top:498.1px;font-size:11px;color:#222;">Practice Most Frequent Diagnoses</div>
<div class="a" style="left:780.4px;top:425.4px;width:716.5px;height:100.8px;background:#fff;border:1px solid #c8c8c8;border-radius:20px"></div>
<div class="t" style="left:793px;top:439.6px;font-size:11px;color:#222;">NICOTINE DEPENDENCE, UNSPECIFIED, UNCOMPLICATED [F17.200]</div>
<div class="t" style="left:793px;top:452.5px;font-size:11px;color:#222;">ACUTE LYMPHANGITIS OF CHEST WALL [L03.323]</div>
<div class="t" style="left:793px;top:465.5px;font-size:11px;color:#222;">ACUTE RECURRENT TONSILLITIS DUE TO OTHER SPECIFIED ORGANISMS [J03.81]</div>
<div class="t" style="left:793px;top:478.4px;font-size:11px;color:#222;">CHOLERA DUE TO VIBRIO CHOLERAE 01, BIOVAR CHOLERAE [A00.0]</div>
<div class="t" style="left:793px;top:491.4px;font-size:11px;color:#222;">UNSPECIFIED ATHEROSCLEROSIS OF OTHER TYPE OF BYPASS GRAFT(S) OF THE EXTREMI... [I70.702]</div>
<div class="t" style="left:793px;top:504.3px;font-size:11px;color:#222;">SPRAIN OF LIGAMENTS OF CERVICAL SPINE, INITIAL ENCOUNTER [S13.4XXA]</div>
<div class="t b" style="left:466.3px;top:558.7px;font-size:12px;color:#222;">Disposition:</div>
<div class="a" style="left:541px;top:548px;width:953.7px;height:31.5px;background:#fff;border:1px solid #c4c4c4;border-radius:16px"></div>
<svg style="left:1486.5px;top:571px" width="8" height="8"><path d="M1 7 L7 1 M4.5 7.5 L7.5 4.5" stroke="#444" stroke-width="1"/></svg>
<div class="t b" style="left:467.3px;top:610.0px;font-size:12px;color:#222;">Follow Up:</div>
<div class="a" style="left:537.8px;top:597px;width:49.4px;height:31.5px;background:#fff;border:1px solid #c4c4c4;border-radius:16px"></div>
<div class="a" style="left:598px;top:597px;width:98.7px;height:31.5px;background:linear-gradient(#fbfbfb,#e3e3e3);border:1px solid #b8b8b8;border-radius:4px;box-shadow:0 1px 1px rgba(0,0,0,0.1)"></div>
<div class="t" style="left:606px;top:607.0px;font-size:11px;color:#222;">Day(s)</div>
<svg style="left:684.5px;top:607.5px" width="6" height="10"><path d="M0 3.8 L2.75 0 L5.5 3.8Z M0 5.6 L2.75 9.4 L5.5 5.6Z" fill="#222"/></svg>
<div class="a" style="left:716.8px;top:597.8px;width:1.0px;height:29.6px;background:#c8c8c8;"></div>
<div class="a" style="left:741.8px;top:604.3px;width:15.9px;height:15.9px;background:#fff;border:1px solid #cfcfcf;border-radius:3px"></div>
<div class="t" style="left:766.7px;top:607.3px;font-size:11px;color:#222;">PRN</div>
<div class="a b" style="left:1297px;top:597.3px;width:71.5px;height:31.3px;background:#1f5fa6;border-radius:15.7px;color:#fff;font-size:12px;display:flex;align-items:center;justify-content:center;white-space:nowrap"><span style="display:flex;align-items:center;position:relative;top:1.2px">SAVE</span></div>
<div class="a b" style="left:1378.8px;top:597.3px;width:118.1px;height:31.3px;background:#1f5fa6;border-radius:15.7px;color:#fff;font-size:12px;display:flex;align-items:center;justify-content:center;white-space:nowrap"><span style="display:flex;align-items:center;position:relative;top:1.2px">SAVE &amp; NEXT</span></div>
<div class="a" style="left:462px;top:640px;width:1034.5px;height:39.0px;background:#e1e1e1;border-radius:6px"></div>
<div class="a" style="left:462px;top:678.3px;width:1034.5px;height:1.2px;background:#c9c9c9;"></div>
<div class="t b" style="left:471.7px;top:654.4px;font-size:12px;color:#222;">Add Problem from Superbill</div>
<div class="a" style="left:637.8px;top:649px;width:65.0px;height:22.1px;background:linear-gradient(#fbfbfb,#e6e6e6);border:1px solid #bdbdbd;border-radius:5px"></div>
<div class="t" style="left:646px;top:654.9px;font-size:11px;color:#222;">ICD-10</div>
<svg style="left:691px;top:655px" width="6" height="10"><path d="M0 3.8 L2.75 0 L5.5 3.8Z M0 5.6 L2.75 9.4 L5.5 5.6Z" fill="#222"/></svg>
<div class="a b" style="left:1188.2px;top:643px;width:298.8px;height:32.0px;background:#1f5fa6;border-radius:16.0px;color:#fff;font-size:12px;display:flex;align-items:center;justify-content:center;white-space:nowrap"><span style="display:flex;align-items:center;position:relative;top:1.2px"><svg style="position:relative;left:auto;top:0.4px;margin-right:9.5px" width="13" height="13"><circle cx="6.5" cy="6.5" r="5.8" fill="none" stroke="#fff" stroke-width="1.2"/><path d="M6.5 3.5 L6.5 9.5 M3.5 6.5 L9.5 6.5" stroke="#fff" stroke-width="1.3"/></svg>ADD TO CURRENT NOTE ASSESSMENTS</span></div>
<div class="a" style="left:462px;top:679.5px;width:1034.5px;height:32.8px;background:#f5f5f5;"></div>
<div class="t b" style="left:471.7px;top:691.4px;font-size:11px;color:#222;">DIAGNOSIS CODES</div>
<div class="a" style="left:462px;top:712.3px;width:1034.5px;height:47.6px;background:#e0e0e0;"></div>
<div class="a" style="left:474.6px;top:731.0px;width:12.2px;height:11.5px;background:#fff;border:1px solid #c8c8c8;border-radius:3px"></div>
<div class="t" style="left:492.6px;top:732.1px;font-size:10px;color:#234223;">Acquired spondylolisthesis <span style="font-size:11px">[<span style="color:#1e3fc8">M43.00</span>]</span></div>
<div class="a" style="left:737.8px;top:724.4px;width:12.2px;height:12.6px;background:#fff;border:1px solid #c8c8c8;border-radius:3px"></div>
<div class="t" style="left:755.2px;top:723.7px;font-size:10px;line-height:12.6px;color:#263236">Closed fracture of olecranon process of ulna<br><span style="font-size:11px">[<span style="color:#1e3fc8">S52.023A</span>]</span></div>
<div class="a" style="left:996px;top:731.0px;width:12.2px;height:11.5px;background:#fff;border:1px solid #c8c8c8;border-radius:3px"></div>
<div class="t" style="left:1013.9px;top:732.1px;font-size:10px;color:#263236;">Neck sprain and strain <span style="font-size:11px">[<span style="color:#1e3fc8">S13.4XXA</span>]</span></div>
<div class="a" style="left:1248px;top:731.0px;width:12.2px;height:11.5px;background:#fff;border:1px solid #c8c8c8;border-radius:3px"></div>
<div class="t" style="left:1266.3px;top:732.1px;font-size:10px;color:#263236;">Sciatica <span style="font-size:11px">[<span style="color:#1e3fc8">M54.30</span>]</span></div>
<div class="a" style="left:462px;top:759.9499999999999px;width:1034.5px;height:47.6px;background:#f2f2f2;"></div>
<div class="a" style="left:474.6px;top:778.65px;width:12.2px;height:11.5px;background:#fff;border:1px solid #c8c8c8;border-radius:3px"></div>
<div class="t" style="left:492.6px;top:779.8px;font-size:10px;color:#234223;">Acquired spondylolisthesis <span style="font-size:11px">[<span style="color:#1e3fc8">M43.00</span>]</span></div>
<div class="a" style="left:737.8px;top:778.65px;width:12.2px;height:11.5px;background:#fff;border:1px solid #c8c8c8;border-radius:3px"></div>
<div class="t" style="left:755.2px;top:779.8px;font-size:10px;color:#263236;">Closed fracture of patella <span style="font-size:11px">[<span style="color:#1e3fc8">S82.009A</span>]</span></div>
<div class="a" style="left:996px;top:778.65px;width:12.2px;height:11.5px;background:#fff;border:1px solid #c8c8c8;border-radius:3px"></div>
<div class="t" style="left:1013.9px;top:779.8px;font-size:10px;color:#263236;">Olecranon bursitis <span style="font-size:11px">[<span style="color:#1e3fc8">M70.20</span>]</span></div>
<div class="a" style="left:1248px;top:772.05px;width:12.2px;height:12.6px;background:#fff;border:1px solid #c8c8c8;border-radius:3px"></div>
<div class="t" style="left:1266.3px;top:771.3px;font-size:10px;line-height:12.6px;color:#263236">Spinal stenosis, unspecified region other than cer<br><span style="font-size:11px">[<span style="color:#1e3fc8">M48.00</span>]</span></div>
<div class="a" style="left:462px;top:807.5999999999999px;width:1034.5px;height:47.6px;background:#e0e0e0;"></div>
<div class="a" style="left:474.6px;top:826.3px;width:12.2px;height:11.5px;background:#fff;border:1px solid #c8c8c8;border-radius:3px"></div>
<div class="t" style="left:492.6px;top:827.4px;font-size:10px;color:#234223;">Adhesive capsulitis of shoulder <span style="font-size:11px">[<span style="color:#1e3fc8">M75.00</span>]</span></div>
<div class="a" style="left:737.8px;top:819.6999999999999px;width:12.2px;height:12.6px;background:#fff;border:1px solid #c8c8c8;border-radius:3px"></div>
<div class="t" style="left:755.2px;top:819.0px;font-size:10px;line-height:12.6px;color:#263236">Closed fracture of shaft of radius (alone)<br><span style="font-size:11px">[<span style="color:#1e3fc8">S52.309A</span>]</span></div>
<div class="a" style="left:996px;top:819.6999999999999px;width:12.2px;height:12.6px;background:#fff;border:1px solid #c8c8c8;border-radius:3px"></div>
<div class="t" style="left:1013.9px;top:819.0px;font-size:10px;line-height:12.6px;color:#263236">Other affections of shoulder region, not<br>elsewhere <span style="font-size:11px">[<span style="color:#1e3fc8">M75.30</span>]</span></div>
<div class="a" style="left:1248px;top:819.6999999999999px;width:12.2px;height:12.6px;background:#fff;border:1px solid #c8c8c8;border-radius:3px"></div>
<div class="t" style="left:1266.3px;top:819.0px;font-size:10px;line-height:12.6px;color:#263236">Sprain and strain of lateral collateral ligament o<br><span style="font-size:11px">[<span style="color:#1e3fc8">S83.429A</span>]</span></div>
<div class="a" style="left:462px;top:855.25px;width:1034.5px;height:47.6px;background:#f2f2f2;"></div>
<div class="a" style="left:474.6px;top:873.95px;width:12.2px;height:11.5px;background:#fff;border:1px solid #c8c8c8;border-radius:3px"></div>
<div class="t" style="left:492.6px;top:875.1px;font-size:10px;color:#234223;">Other closed fracture of femur <span style="font-size:11px">[<span style="color:#1e3fc8">S72.009A</span>]</span></div>
<div class="a" style="left:737.8px;top:867.35px;width:12.2px;height:12.6px;background:#fff;border:1px solid #c8c8c8;border-radius:3px"></div>
<div class="t" style="left:755.2px;top:866.6px;font-size:10px;line-height:12.6px;color:#263236">Closed fracture of shaft of radius with ulna<br><span style="font-size:11px">[<span style="color:#1e3fc8">S52.309A</span>]</span></div>
<div class="a" style="left:996px;top:867.35px;width:12.2px;height:12.6px;background:#fff;border:1px solid #c8c8c8;border-radius:3px"></div>
<div class="t" style="left:1013.9px;top:866.6px;font-size:10px;line-height:12.6px;color:#263236">Other closed transcervical fracture of femur<br><span style="font-size:11px">[<span style="color:#1e3fc8">S72.039A</span>]</span></div>
<div class="a" style="left:1248px;top:867.35px;width:12.2px;height:12.6px;background:#fff;border:1px solid #c8c8c8;border-radius:3px"></div>
<div class="t" style="left:1266.3px;top:866.6px;font-size:10px;line-height:12.6px;color:#263236">Sprain and strain of medial collateral ligament of<br><span style="font-size:11px">[<span style="color:#1e3fc8">S83.419A</span>]</span></div>
<div class="a" style="left:1508.2px;top:110.6px;width:6.6px;height:439.2px;background:#707070;border-radius:3.3px"></div>
<!-- /MAIN -->
<!-- MID -->
<div class="a" style="left:228.7px;top:103.3px;width:217.3px;height:95.7px;background:#cddcd8"></div>
<svg style="left:381.2px;top:104.8px" width="64.6" height="59.2" viewBox="0 0 64.6 59.2">
<defs><linearGradient id="bgp" x1="0" y1="0" x2="1" y2="1"><stop offset="0" stop-color="#c4c8cc"/><stop offset="1" stop-color="#d0d3d6"/></linearGradient>
<linearGradient id="hair" x1="0" y1="0" x2="0" y2="1"><stop offset="0" stop-color="#6f5f58"/><stop offset="0.3" stop-color="#a89890"/><stop offset="1" stop-color="#c4b6a6"/></linearGradient>
<radialGradient id="face" cx="0.45" cy="0.4" r="0.6"><stop offset="0" stop-color="#f0d2c0"/><stop offset="1" stop-color="#d9aa94"/></radialGradient></defs>
<rect width="64.6" height="59.2" fill="url(#bgp)"/>
<path d="M12.2 57 C11.5 40 11.5 22 15 12 C18 4 25 0.4 34 0.4 C44 0.4 50 6 53 14 C56 24 56 42 58 57Z" fill="url(#hair)"/>
<path d="M20 43 L43.4 43 L43.4 53 L20 53Z" fill="#dcb29c"/>
<ellipse cx="32.2" cy="27.6" rx="12.6" ry="17" fill="url(#face)"/>
<path d="M19 22 C20 12 26 8 34 8 C30 12 24 16 19 30Z" fill="#a49282"/>
<path d="M45 22 C44 12 40 9 34 8 C40 12 44 18 46 32Z" fill="#8c7a70"/>
<path d="M21 24 L27 23.6 M34 23.6 L40.5 24" stroke="#5a4440" stroke-width="1.5" stroke-linecap="round"/>
<path d="M26 36.6 C29 35.6 34 35.6 37 36.6 C34 38.6 29 38.6 26 36.6Z" fill="#c9847a"/>
<path d="M0 51 C6 50 12 51 18 51.5 C24 54.5 38 54.5 46 51.5 C52 51 58 50.5 64.6 51 L64.6 59.2 L0 59.2Z" fill="#141414"/>
<path d="M12.5 51 L19.5 51.5 L18.5 56 L13.5 57.5Z M57.5 51 L48 51.5 L50 56 L56.5 57Z" fill="#a89a8c"/>
</svg>
<div class="t b" style="left:234px;top:105.4px;font-size:12px;color:#17508c">Test, Tammie</div>
<div class="t" style="left:234px;top:123.2px;font-size:12px;color:#1c5599">40 year old female,</div>
<div class="t" style="left:234px;top:137.6px;font-size:12px;color:#1c5599">DOB: Jan 1, 1985</div>
<div class="t" style="left:234px;top:152.0px;font-size:12px;color:#1c5599">Tel: (666) 666-6666</div>
<svg style="left:241px;top:175px" width="15" height="17"><rect x="0" y="2.3" width="14.7" height="14.4" rx="1.8" fill="#112b2b"/><rect x="2.4" y="0" width="3" height="4.6" rx="1.5" fill="#112b2b"/><rect x="9.3" y="0" width="3" height="4.6" rx="1.5" fill="#112b2b"/><rect x="3.3" y="1.2" width="1.2" height="2.4" rx="0.6" fill="#e8f0ee"/><rect x="10.2" y="1.2" width="1.2" height="2.4" rx="0.6" fill="#e8f0ee"/><g fill="#f4f8f7"><rect x="1.4" y="6.2" width="2.2" height="2.2" rx="0.5"/><rect x="4.7" y="6.2" width="2.2" height="2.2" rx="0.5"/><rect x="8.0" y="6.2" width="2.2" height="2.2" rx="0.5"/><rect x="11.3" y="6.2" width="2.2" height="2.2" rx="0.5"/><rect x="1.4" y="9.6" width="2.2" height="2.2" rx="0.5"/><rect x="4.7" y="9.6" width="2.2" height="2.2" rx="0.5"/><rect x="8.0" y="9.6" width="2.2" height="2.2" rx="0.5"/><rect x="11.3" y="9.6" width="2.2" height="2.2" rx="0.5"/><rect x="1.4" y="13.0" width="2.2" height="2.2" rx="0.5"/><rect x="4.7" y="13.0" width="2.2" height="2.2" rx="0.5"/><rect x="8.0" y="13.0" width="2.2" height="2.2" rx="0.5"/><rect x="11.3" y="13.0" width="2.2" height="2.2" rx="0.5"/></g></svg>
<div class="t b" style="left:265.9px;top:171.8px;font-size:12px;color:#144a8e">CLINICAL DATE</div>
<div class="t" style="left:265.9px;top:186.5px;font-size:10px;color:#222">JUN 20, 2024 TO JUN 20, 2024</div>
<div class="a" style="left:228.7px;top:199px;width:217.3px;height:76.5px;background:linear-gradient(#fbefe9,#fbefe9 60%,#fff)"></div>
<div class="a" style="left:233.9px;top:204.2px;width:102.9px;height:19.6px;background:#1f5fa6;border-radius:3px;color:#fff;font-size:11px;line-height:21.6px;text-align:center;white-space:nowrap">View Note</div>
<div class="a" style="left:341.4px;top:204.2px;width:102.9px;height:19.6px;background:#1f5fa6;border-radius:3px;color:#fff;font-size:11px;line-height:21.6px;text-align:center;white-space:nowrap">Instructions</div>
<div class="a" style="left:233.9px;top:226.3px;width:102.9px;height:19.4px;background:#1f5fa6;border-radius:3px;color:#fff;font-size:11px;line-height:21.4px;text-align:center;white-space:nowrap">View All Notes</div>
<div class="a" style="left:341.4px;top:226.3px;width:102.9px;height:19.4px;background:#1f5fa6;border-radius:3px;color:#fff;font-size:11px;line-height:21.4px;text-align:center;white-space:nowrap">Templates</div>
<div class="a" style="left:233.9px;top:248.2px;width:102.9px;height:21.5px;background:#1f5fa6;border-radius:3px;color:#fff;font-size:11px;line-height:23.5px;text-align:center;white-space:nowrap">Questionnaires</div>
<div class="a" style="left:341.4px;top:248.2px;width:102.9px;height:21.5px;background:#1f5fa6;border-radius:3px;color:#fff;font-size:11px;line-height:23.5px;text-align:center;white-space:nowrap">Attachments</div>
<div class="a" style="left:229.5px;top:275.5px;width:216.5px;height:23.8px;border:1px solid #b5b5b5;border-radius:5px;background:linear-gradient(#fdfdfd,#ececec)"></div>
<div class="t" style="left:237px;top:280.9px;font-size:12px;color:#222">Visit Note II</div>
<svg style="left:434.5px;top:282.5px" width="6" height="10"><path d="M0 3.8 L2.75 0 L5.5 3.8Z M0 5.6 L2.75 9.4 L5.5 5.6Z" fill="#222"/></svg>
<div class="a" style="left:228.7px;top:299.5px;width:218px;height:4.3px;background:#d6d6d6"></div>
<div class="a" style="left:229.4px;top:306.0px;width:217.4px;height:20.7px;background:#dadada"></div>
<div class="t" style="left:236.5px;top:310.1px;font-size:12px;color:#164a8e">CURRENT NOTE</div>
<div class="a" style="left:229.4px;top:329.9px;width:217.4px;height:20.7px;background:#dadada"></div>
<div class="t" style="left:236.5px;top:334.1px;font-size:12px;color:#164a8e">HPI</div>
<div class="a" style="left:229.4px;top:353.9px;width:217.4px;height:20.7px;background:#dadada"></div>
<div class="t" style="left:236.5px;top:358.0px;font-size:12px;color:#164a8e">New ROS Form</div>
<div class="a" style="left:229.4px;top:377.9px;width:217.4px;height:20.7px;background:#dadada"></div>
<div class="t" style="left:236.5px;top:382.0px;font-size:12px;color:#164a8e">Histories &amp; Habits</div>
<div class="a" style="left:229.4px;top:401.8px;width:217.4px;height:20.7px;background:#dadada"></div>
<div class="t" style="left:236.5px;top:405.9px;font-size:12px;color:#164a8e">Physical Exam</div>
<div class="a" style="left:229.4px;top:425.8px;width:217.4px;height:20.7px;background:#dadada"></div>
<div class="t" style="left:236.5px;top:429.9px;font-size:12px;color:#164a8e">Medications</div>
<div class="a" style="left:229.4px;top:449.7px;width:217.4px;height:20.7px;background:#dadada"></div>
<div class="t" style="left:236.5px;top:453.8px;font-size:12px;color:#164a8e">Medications 2.0</div>
<div class="a" style="left:229.4px;top:473.6px;width:217.4px;height:20.7px;background:#dadada"></div>
<div class="t" style="left:236.5px;top:477.8px;font-size:12px;color:#164a8e">PHQ-9</div>
<div class="t b" style="left:236.5px;top:501.7px;font-size:12px;color:#111">Assessment &amp; Plan</div>
<div class="a" style="left:229.4px;top:521.5px;width:217.4px;height:20.7px;background:#dadada"></div>
<div class="t" style="left:236.5px;top:525.6px;font-size:12px;color:#164a8e">Orders &amp; Procedures</div>
<div class="a" style="left:229.4px;top:545.5px;width:217.4px;height:20.7px;background:#dadada"></div>
<div class="t" style="left:236.5px;top:549.6px;font-size:12px;color:#164a8e">PHQ-10</div>
<div class="a" style="left:229.2px;top:570.5px;width:215.8px;height:120.1px;background:#cddcd8"></div>
<div class="a" style="left:237px;top:579.3px;width:97.0px;height:21.7px;background:#1f5fa6;border-radius:3px;color:#fff;font-size:11px;line-height:23.7px;text-align:center;white-space:nowrap">Drawing Tool</div>
<div class="a" style="left:336.8px;top:579.3px;width:97.0px;height:21.7px;background:#1f5fa6;border-radius:3px;color:#fff;font-size:11px;line-height:23.7px;text-align:center;white-space:nowrap">Voice Recorder</div>
<div class="a" style="left:237px;top:605.8px;width:97.0px;height:20.2px;background:#1f5fa6;border-radius:3px;color:#fff;font-size:11px;line-height:22.2px;text-align:center;white-space:nowrap">Note Sign off</div>
<div class="a" style="left:336.8px;top:605.8px;width:97.0px;height:20.2px;background:#1f5fa6;border-radius:3px;color:#fff;font-size:11px;line-height:22.2px;text-align:center;white-space:nowrap">Assign Note</div>
<div class="a" style="left:238.8px;top:630.8px;width:14px;height:14.2px;background:#2a7cf0;border-radius:3px"></div>
<svg style="left:238.8px;top:630.8px" width="14" height="14"><path d="M3.2 7.2 L6 10 L11 4" fill="none" stroke="#fff" stroke-width="2" stroke-linecap="round" stroke-linejoin="round"/></svg>
<div class="t" style="left:259.7px;top:633.3px;font-size:10px;color:#111">Private Visit</div>
<div class="a" style="left:238.8px;top:651.7px;width:14px;height:14.2px;background:#2a7cf0;border-radius:3px"></div>
<svg style="left:238.8px;top:651.7px" width="14" height="14"><path d="M3.2 7.2 L6 10 L11 4" fill="none" stroke="#fff" stroke-width="2" stroke-linecap="round" stroke-linejoin="round"/></svg>
<div class="t" style="left:259.7px;top:654.2px;font-size:10px;color:#111">Patient Portal Access</div>
<div class="a" style="left:237px;top:671px;width:70px;height:19.6px;background:#1f5fa6;border-radius:3px 3px 0 0;color:#fff;font-size:11px;line-height:22px;text-align:center">Sign Note</div>
<!-- /MID -->
<div id="left"></div>
</body></html>
